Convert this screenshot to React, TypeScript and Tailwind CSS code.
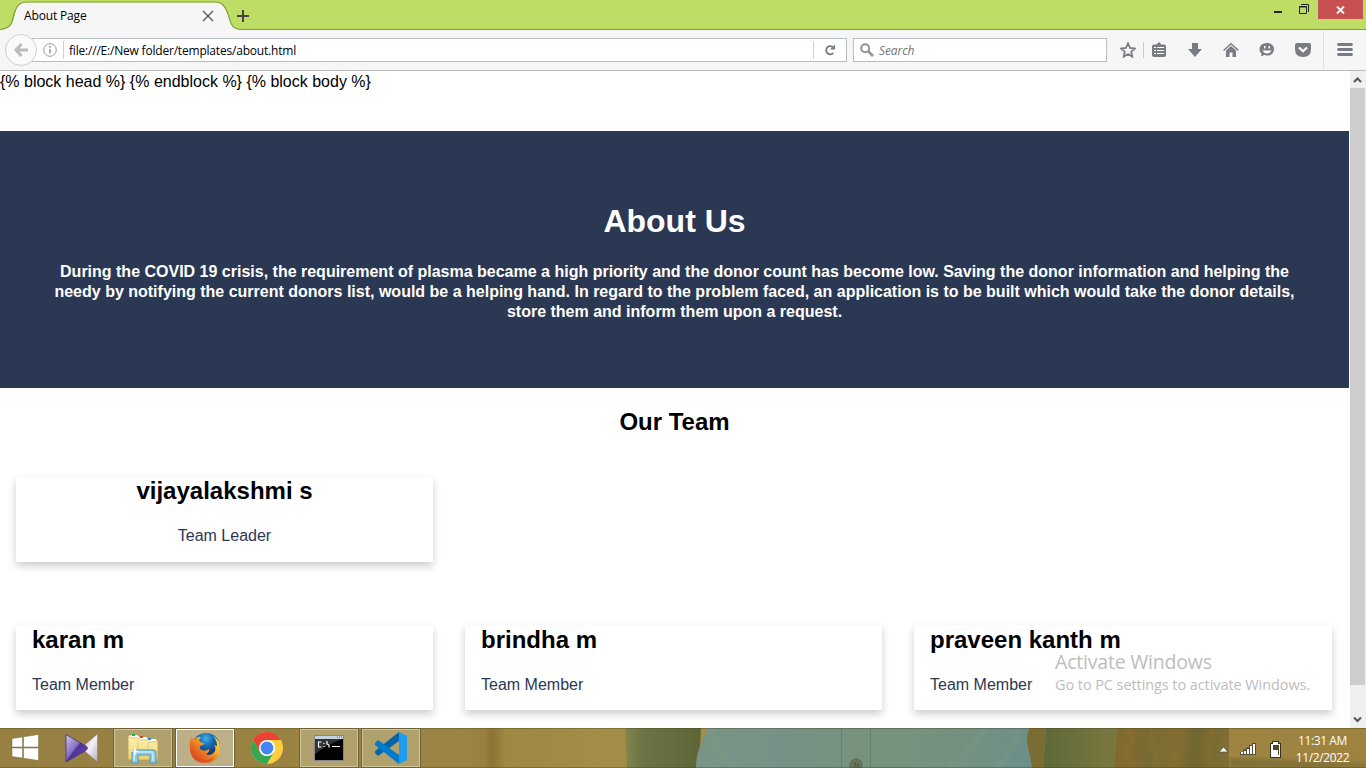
import React from "react";

const UI = "font-['Open_Sans','Noto_Sans',sans-serif]";

function TabStrip() {
  return (
    <div className="relative flex h-[30px] shrink-0 bg-[#bedd64]">
      <svg className="absolute left-0 top-0" width="1366" height="30" viewBox="0 0 1366 30">
        <path d="M0 29.500H1366" stroke="#7e9d43" />
        <path d="M0 29.500C13 28 13 22 15 14C17 5 20 2.500 27 2.500H215C222 2.500 225 6 228 14C231 22 230 29 241 29.500V31H0Z" fill="#f6f6f6" />
        <path d="M0 29.500C12 28 12 22 14 14C17 5 20 2 27 2H215C222 2 225 6 228 14C231 22 230 29 241 29.500" fill="none" stroke="#82a244" strokeWidth="1.200" />
      </svg>
      <div className="relative flex w-[236px] items-center pl-6 pt-0.5">
        <span className="w-[178px] text-[12px] leading-none tracking-[-0.15px] text-black">About Page</span>
        <svg width="12" height="12" viewBox="0 0 12 12" stroke="#555" strokeWidth="1.300"><path d="M1 1L11 11M11 1L1 11" /></svg>
      </div>
      <svg className="relative mt-[9px]" width="14" height="14" viewBox="0 0 14 14" stroke="#444" strokeWidth="2"><path d="M1 7H13M7 1V13" /></svg>
      <div className="relative ml-auto flex pr-[3px]">
        <svg className="mr-1" width="40" height="20" viewBox="0 0 40 20" fill="none" stroke="#222">
          <path d="M0 12H8" strokeWidth="2" />
          <path d="M25.500 6.500H32.500V13.500H25.500ZM25 7H33M27 4.500H34.500V12" />
        </svg>
        <div className="flex h-[19px] w-[45px] items-center justify-center bg-[#c75050]">
          <svg width="9" height="8" viewBox="0 0 9 8" stroke="#fff" strokeWidth="1.800"><path d="M1 .5L8 7.500M8 .5L1 7.500" /></svg>
        </div>
      </div>
    </div>
  );
}

function ToolIcon({ box, children }: { box: string; children: React.ReactNode }) {
  return (
    <div className={`flex h-full items-center justify-center ${box}`}>
      <svg width="16" height="16" viewBox="0 0 16 16" fill="#797c80">{children}</svg>
    </div>
  );
}

function Toolbar() {
  return (
    <div className="flex h-[41px] shrink-0 items-center border-b border-[#b9b9bb] bg-[#f6f6f6]">
      <div className="z-10 ml-[5px] flex size-8 shrink-0 items-center justify-center rounded-full border border-[#d0d0d3] bg-[#fafafa]">
        <svg width="14" height="14" viewBox="0 0 14 14" fill="none" stroke="#bcbcbc" strokeWidth="3"><path d="M7.500 1L2 7L7.500 13M2 7H14" /></svg>
      </div>
      <div className="ml-[-7px] flex h-6 w-[817px] shrink-0 items-center border border-[#b5bec9] bg-white">
        <svg className="ml-3" width="14" height="14" viewBox="0 0 14 14" fill="none" stroke="#999"><circle cx="7" cy="7" r="6.300" /><path d="M7 6V10.500M7 3V4.700" strokeWidth="1.600" /></svg>
        <div className="ml-[6px] h-[18px] w-px bg-[#d0d0d0]" />
        <span className="ml-[5px] w-[744px] whitespace-nowrap pt-px text-[12px] leading-none tracking-[-0.2px] text-black">file:///E:/New folder/templates/about.html</span>
        <div className="h-[18px] w-px bg-[#d0d0d0]" />
        <svg className="ml-2.5" width="12" height="12" viewBox="0 0 13 12"><path d="M9.500 2.800A4.400 4.400 0 1 0 10 9.300" fill="none" stroke="#7b7b7b" strokeWidth="2" /><path d="M12 0V5.500H6.500Z" fill="#7b7b7b" /></svg>
      </div>
      <div className="ml-1.5 flex h-6 w-[254px] shrink-0 items-center border border-[#b5bec9] bg-white">
        <svg className="ml-1.5" width="14" height="14" viewBox="0 0 14 14" fill="none" stroke="#929292"><circle cx="5.200" cy="5.200" r="4" strokeWidth="2" /><path d="M8.300 8.300L13 13" strokeWidth="2.600" /></svg>
        <span className="ml-[5px] pt-px text-[12px] italic leading-none tracking-[-0.1px] text-[#757575]">Search</span>
      </div>
      <ToolIcon box="ml-[5px] w-[31px]"><path d="M8 1.300L10 5.900L15 6.400L11.200 9.700L12.300 14.700L8 12.100L3.700 14.700L4.800 9.700L1 6.400L6 5.900Z" fill="none" stroke="#797c80" strokeWidth="1.700" /></ToolIcon>
      <div className="h-4 w-px bg-[#cbcbcb]" />
      <ToolIcon box="w-[30px]"><path d="M3 2.500H5.500L8 0L10.500 2.500H13Q15 2.500 15 4.500V13Q15 15 13 15H3Q1 15 1 13V4.500Q1 2.500 3 2.500Z" /><path d="M3 5.500H5M6 5.500H13M3 8.500H5M6 8.500H13M3 11.500H5M6 11.500H13" stroke="#fff" /></ToolIcon>
      <ToolIcon box="ml-[3px] w-9"><path d="M5 1H11V7H15L8 15L1 7H5Z" /></ToolIcon>
      <ToolIcon box="w-9"><path d="M3 8.500L8 4L13 8.500V15H9.500V10.500H6.500V15H3Z" /><path d="M.6 8.500L8 1.700L15.400 8.500" fill="none" stroke="#797c80" strokeWidth="1.500" /></ToolIcon>
      <ToolIcon box="w-9"><path d="M8 1C12.500 1 15 3.800 15 7.300S12.500 13.500 8 13.500C7 13.500 6 13.300 5.200 13L2 14.500L2.600 11.500C1.300 10.500.5 9.300.5 7.300C.5 3.800 3.500 1 8 1Z" /><path d="M5.800 4V6.500M10.200 4V6.500" stroke="#fff" strokeWidth="1.400" /><path d="M3.500 8.500H12.500Q11 11.500 8 11.500T3.500 8.500" fill="#fff" /></ToolIcon>
      <ToolIcon box="w-9"><path d="M2 1H14Q16 1 16 3V7Q16 15 8 15T0 7V3Q0 1 2 1Z" /><path d="M4 5.500L8 9.300L12 5.500" fill="none" stroke="#fff" strokeWidth="2.200" /></ToolIcon>
      <div className="ml-0.5 h-[38px] w-px bg-[#dedede]" />
      <ToolIcon box="w-[42px]"><path d="M1.500 2.500H14.500M1.500 7.500H14.500M1.500 12.500H14.500" stroke="#797c80" strokeWidth="2.800" strokeLinecap="round" /></ToolIcon>
    </div>
  );
}

function Card({ name, role, center = false }: { name: string; role: string; center?: boolean }) {
  return (
    <div className={`h-[85px] bg-white px-4 shadow-[0_4px_8px_0_rgba(0,0,0,0.2)] ${center ? "text-center" : "pt-px"}`}>
      <h2 className="text-[24px] font-bold leading-[28px]">{name}</h2>
      <p className="mt-[22px] text-[16px] leading-[18px] text-[#2b3853]">{role}</p>
    </div>
  );
}

function Page() {
  return (
    <div className="flex h-[657px] shrink-0 overflow-hidden">
      <main className="relative w-[1349px] bg-white font-['Liberation_Sans',Arial,sans-serif] text-black">
        <p className="h-[60px] pt-0.5 text-[16px] leading-[18px]">{"{% block head %} {% endblock %} {% block body %}"}</p>
        <section className="h-[257px] bg-[#2b3853] px-[50px] pt-[71px] text-center font-bold text-white">
          <h1 className="text-[32px] leading-[38px]">About Us</h1>
          <p className="mt-[22px] text-[16px] leading-5">During the COVID 19 crisis, the requirement of plasma became a high priority and the donor count has become low. Saving the donor information and helping the needy by notifying the current donors list, would be a helping hand. In regard to the problem faced, an application is to be built which would take the donor details, store them and inform them upon a request.</p>
        </section>
        <h2 className="pt-5 text-center text-[24px] font-bold leading-[28px]">Our Team</h2>
        <div className="mt-[41px] grid grid-cols-[417px_417px_418px] gap-x-8 gap-y-[63px] pl-4">
          <Card name="vijayalakshmi s" role="Team Leader" center />
          <div className="col-span-2" />
          <Card name="karan m" role="Team Member" />
          <Card name="brindha m" role="Team Member" />
          <Card name="praveen kanth m" role="Team Member" />
        </div>
        <div className={`absolute left-[1055px] top-[579px] whitespace-nowrap text-[#bdbdbd] ${UI}`}>
          <div className="text-[19.500px] leading-[24px] tracking-[-0.2px]">Activate Windows</div>
          <div className="pt-px text-[14.500px] leading-[20px] tracking-[-0.08px]">Go to PC settings to activate Windows.</div>
        </div>
      </main>
      <div className="flex w-[17px] flex-col border-l border-white bg-[#f0f0f0]">
        <svg width="15" height="17" viewBox="0 0 15 17" fill="none" stroke="#555" strokeWidth="2"><path d="M4 11L7.500 7.500L11 11" /></svg>
        <div className="h-[597px] w-[15px] bg-[#cdcdcd]" />
        <svg className="mt-[26px]" width="15" height="17" viewBox="0 0 15 17" fill="none" stroke="#555" strokeWidth="2"><path d="M4 6.500L7.500 10L11 6.500" /></svg>
      </div>
    </div>
  );
}

function Wallpaper() {
  return (
    <svg className="absolute inset-0" width="1366" height="40" viewBox="0 0 1366 40" preserveAspectRatio="none">
      <defs>
        <linearGradient id="wall"><stop offset="0" stopColor="#968042" /><stop offset=".34" stopColor="#9b8443" /><stop offset=".354" stopColor="#9a8040" /><stop offset=".36" stopColor="#8c7236" /><stop offset=".37" stopColor="#9f8841" /><stop offset=".47" stopColor="#a38e49" /><stop offset="1" stopColor="#9d8240" /></linearGradient>
        <linearGradient id="sleeve"><stop offset="0" stopColor="#85864a" /><stop offset=".2" stopColor="#6c7544" /><stop offset="1" stopColor="#5d6538" /></linearGradient>
        <linearGradient id="shirt"><stop offset="0" stopColor="#789584" /><stop offset=".25" stopColor="#769286" /><stop offset=".5" stopColor="#77917c" /><stop offset=".75" stopColor="#75917e" /><stop offset="1" stopColor="#6c8f89" /></linearGradient>
        <linearGradient id="side"><stop offset="0" stopColor="#5e6938" /><stop offset="1" stopColor="#7a783f" /></linearGradient>
        <linearGradient id="bark"><stop offset="0" stopColor="#7d6b32" /><stop offset=".15" stopColor="#83692f" /><stop offset=".3" stopColor="#756b34" /><stop offset=".5" stopColor="#846d32" /><stop offset=".7" stopColor="#726730" /><stop offset="1" stopColor="#806f34" /></linearGradient>
        <filter id="soft"><feGaussianBlur stdDeviation="2.500" /></filter>
      </defs>
      <path d="M0 0H1366V40H0Z" fill="url(#wall)" />
      <path d="M625 0H701L699 40H627Z" fill="url(#sleeve)" />
      <path d="M708 0H1030C1023 12 1030 20 1032 40H696C696 25 700 18 708 0Z" fill="url(#shirt)" />
      <path d="M709 0Q720 28 735 40M1020 0Q1010 28 995 40M985 0Q970 25 950 40" stroke="#91a084" strokeWidth="4" fill="none" opacity=".3" filter="url(#soft)" />
      <path d="M841.500 0V40M870.500 0V40" stroke="#5c7c6a" opacity=".7" />
      <circle cx="856" cy="37" r="6" fill="#66785a" stroke="#536649" /><path d="M855 34V39M858 35V40" stroke="#464d34" />
      <path d="M1030 0H1046L1043 40H1032C1030 20 1023 12 1030 0Z" fill="#7a6d34" />
      <path d="M1046 0H1117L1114 40H1043Z" fill="url(#side)" />
      <path d="M1117 0H1229V40H1114Z" fill="url(#bark)" />
      <path d="M1128 0L1132 12L1124 25L1135 40M1155 0L1150 16L1158 28L1153 40M1180 0L1184 16L1174 30L1180 40M1214 0L1207 15L1212 40" stroke="#a17a35" strokeWidth="4" fill="none" opacity=".3" filter="url(#soft)" />
      <path d="M1229 30L1366 36V40H1229Z" fill="#746a34" opacity=".8" filter="url(#soft)" />
      <path d="M0 .5H1366M0 39.500H1366" stroke="#453b1d" opacity=".35" />
    </svg>
  );
}

const TASK = "box-border flex h-10 w-[60px] items-center justify-center border border-[#6e6039] bg-[#b1a16c] shadow-[inset_0_0_0_1px_#d0c49c]";

function Taskbar() {
  return (
    <footer className="relative flex h-10 shrink-0 items-center bg-[#968042] text-white">
      <Wallpaper />
      <div className="relative flex w-[50px] justify-center">
        <svg width="28" height="28" viewBox="0 0 28 28" fill="#fff" stroke="#776a3b" strokeWidth=".5"><path d="M1 4.500L11.500 3V13H1ZM12.500 2.800L27.500 .5V13H12.500ZM1 14H11.500V24L1 22.500ZM12.500 14H27.500V26.500L12.500 24.200Z" /></svg>
      </div>
      <div className="relative flex w-[63px] justify-center">
        <svg width="34" height="30" viewBox="0 0 34 30">
          <defs><linearGradient id="violet" x2="1" y2="1"><stop stopColor="#d2c6ef" /><stop offset=".45" stopColor="#8370bb" /><stop offset=".5" stopColor="#4f33a0" /><stop offset="1" stopColor="#6b4bad" /></linearGradient><linearGradient id="silver" x2="1" y2="1"><stop stopColor="#aaa1bb" /><stop offset=".5" stopColor="#f5f1f5" /><stop offset="1" stopColor="#b7acc2" /></linearGradient></defs>
          <path d="M32.500 1V29L16 15Z" fill="url(#silver)" stroke="#887d91" strokeWidth=".6" /><path d="M1 1.500L20 12.500Q25 15 20 18L1 29Z" fill="url(#violet)" stroke="#44307f" strokeWidth=".8" />
        </svg>
      </div>
      <div className={`relative ${TASK}`}>
        <svg width="32" height="32" viewBox="0 0 32 32">
          <defs><linearGradient id="folder" y2="1" x2="0"><stop stopColor="#fff7bc" /><stop offset="1" stopColor="#ebd067" /></linearGradient></defs>
          <path d="M2 3H11L13 5H20L22 8H31V28H1V5Z" fill="url(#folder)" stroke="#b59c56" strokeWidth=".8" />
          <path d="M4 3H10V5H4ZM13 5H19V7H13ZM22 7H29V9H22Z" fill="#fff" /><path d="M5 2H8V4H5Z" fill="#18b438" /><path d="M13 4H16V6H13Z" fill="#d33f2d" /><path d="M21 6H24V8H21Z" fill="#2089d6" />
          <path d="M2 6H11L13 8H20L22 10H30M11 8V17M21 10V17" fill="none" stroke="#d5bd67" strokeWidth=".7" /><path d="M5 31V20Q5 18 8 18H26Q29 18 29 20V31H23V23H11V31Z" fill="#91c9df" stroke="#4f99b5" /><path d="M7 20H26M7 21V29M26 21V29" stroke="#c7edf9" strokeWidth="1.500" />
          <path d="M8 14L8.800 18.500L13 19L8.800 20L8 25L7 20L3 19L7 18.500Z" fill="#fff" />
        </svg>
      </div>
      <div className="relative ml-0.5 box-border flex h-10 w-[60px] items-center justify-center border border-[#6e6039] bg-[#bdb089] shadow-[inset_0_0_0_1px_#fff]">
        <svg width="32" height="32" viewBox="0 0 32 32">
          <defs><radialGradient id="earth" cx=".5" cy=".2"><stop stopColor="#42b0eb" /><stop offset=".5" stopColor="#176fb5" /><stop offset="1" stopColor="#173c77" /></radialGradient><linearGradient id="flame" x1="1" x2="0" y2="1"><stop stopColor="#ffe75a" /><stop offset=".35" stopColor="#f6ad27" /><stop offset=".65" stopColor="#e76920" /><stop offset="1" stopColor="#c7341d" /></linearGradient></defs>
          <circle cx="17" cy="15" r="14" fill="url(#earth)" />
          <path d="M2 5L5 8Q8 4 12 5L10 8Q11 11 15 11Q15 13 11 14Q10 17 13 18Q16 20 20 17Q21 20 17 22Q22 25 26 19Q27 15 25 13L28 14Q28 8 24 4Q32 8 31 18Q29 31 16 31Q4 31 1 19Q0 10 2 5Z" fill="url(#flame)" />
          <path d="M3 13Q3 25 14 28Q22 29 26 23Q22 34 10 28Q2 23 3 13Z" fill="#d84a20" opacity=".7" />
        </svg>
      </div>
      <div className="relative flex w-16 justify-center">
        <svg width="32" height="32" viewBox="0 0 32 32"><circle cx="16" cy="16" r="16" fill="#ffcd40" /><path d="M2.140 8A16 16 0 0 1 29.860 8H16L9.100 20Z" fill="#ea4335" /><path d="M2.140 8A16 16 0 0 0 16 32L22.930 20A8 8 0 0 1 9.070 20Z" fill="#34a853" /><circle cx="16" cy="16" r="8" fill="#fff" /><circle cx="16" cy="16" r="6.400" fill="#4285f4" /></svg>
      </div>
      <div className={`relative ${TASK}`}>
        <svg width="30" height="26" viewBox="0 0 30 26"><path d="M.5 .5H29.500V25.500H.5Z" fill="#000" stroke="#83858b" /><path d="M1 1H29V4H1Z" fill="#c6d1e4" /><path d="M23 2H24M25 2H26M27 2H28" stroke="#526b99" /><path d="M1 4H29Q15 8 1 19Z" fill="#333" /><path d="M7.500 7H4.500V12H7.500M10 8V9M10 11V12M13 6V9L15 10V12.500M18 11.500H26" fill="none" stroke="#fff" strokeWidth="1.200" /></svg>
      </div>
      <div className={`relative ml-0.5 ${TASK}`}>
        <svg width="34" height="34" viewBox="0 0 34 34"><path d="M1 22L4 25L25 10V1L1 20Z" fill="#0065a9" /><path d="M1 12L4 9L25 24V33L1 14Z" fill="#007acc" /><path d="M25 1L33 5V29L25 33Z" fill="#1f9cf0" /></svg>
      </div>
      <div className="relative ml-auto flex h-10 w-[154px] items-center">
        <svg className="ml-1.5 mt-0.5" width="11" height="7" viewBox="0 0 11 7"><path d="M1 6L5.500 1L10 6Z" fill="#fff" stroke="#575038" strokeWidth=".7" /></svg>
        <svg className="ml-[11px] mt-0.5" width="16" height="14" viewBox="0 0 16 14"><path d="M0 10H3V7.500H6V5.500H9V3H12V1H16V13H0Z" fill="#514b32" /><path d="M1 10H3V12H1ZM4 9H6V12H4ZM7 7H9V12H7ZM10 4H12V12H10ZM13 2H15V12H13Z" fill="#fff" /></svg>
        <svg className="ml-3.5 mt-0.5" width="11" height="17" viewBox="0 0 11 17" shapeRendering="crispEdges"><path d="M2 0H9V2H11V17H0V2H2Z" fill="#373321" /><path d="M3 1H8V3H10V16H1V3H3Z" fill="#fff" /><path d="M2.500 4H8.500V14H2.500Z" fill="#4c4528" /><path d="M3 9H8V14H3Z" fill="#fff" /></svg>
        <div className="ml-2 w-[67px] whitespace-nowrap pt-px text-center text-[12px] leading-[17px] tracking-[-0.4px]"><div>11:31 AM</div><div className="tracking-[-0.35px]">11/2/2022</div></div>
      </div>
    </footer>
  );
}

export default function App() {
  return <div className={`flex h-[768px] w-[1366px] flex-col overflow-hidden ${UI}`}><TabStrip /><Toolbar /><Page /><Taskbar /></div>;
}
